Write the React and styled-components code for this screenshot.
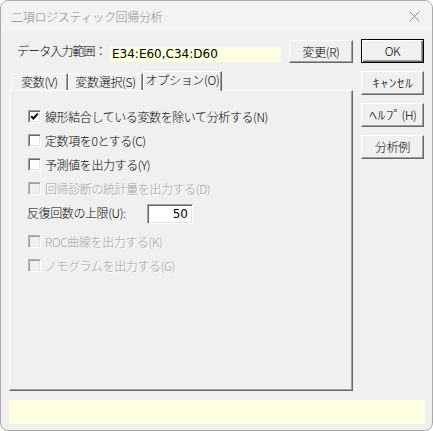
import React from "react";
import styled, { createGlobalStyle } from "styled-components";

const GlobalStyle = createGlobalStyle`
  html, body { margin: 0; padding: 0; background: #ffffff; }
  body { font-family: "Noto Sans CJK JP", "Noto Sans", sans-serif; font-size: 12px; font-weight: 300; color: #000; }
  * { box-sizing: border-box; }
`;

const Window = styled.div`
  width: 433px;
  height: 431px;
  border: 1px solid #a9a9a9;
  border-radius: 8px;
  overflow: hidden;
  background: #f0f0f0;
  display: flex;
  flex-direction: column;
`;

const TitleBar = styled.div`
  height: 30px;
  flex: none;
  background: #f3f3f3;
  display: flex;
  align-items: center;
  justify-content: space-between;
  padding: 0 9px 0 10px;
`;

const Title = styled.span`
  font-size: 12px;
  color: #8a8a8a;
  letter-spacing: -0.3px;
`;

const CloseIcon = styled.svg`
  width: 11px;
  height: 11px;
  margin-right: 3px;
`;

const Body = styled.div`
  flex: 1;
  display: flex;
  flex-direction: column;
  padding: 8px 6px 0 8px;
`;

const Main = styled.div`
  display: flex;
  gap: 8px;
`;

const LeftCol = styled.div`
  width: 344px;
  display: flex;
  flex-direction: column;
`;

const RightCol = styled.div`
  width: 63px;
  display: flex;
  flex-direction: column;
  gap: 8px;
`;

const RangeRow = styled.div`
  height: 23px;
  margin-top: 1px;
  display: flex;
  align-items: center;
`;

const RangeLabel = styled.span`
  width: 101px;
  padding-left: 8px;
  font-size: 12px;
  letter-spacing: -0.9px;
  margin-top: -2px;
`;

const RangeField = styled.div`
  width: 171px;
  height: 15px;
  align-self: flex-end;
  margin-bottom: 1px;
  background: #ffffe1;
  padding-left: 2px;
  font-family: "DejaVu Sans", sans-serif;
  font-weight: 400;
  font-size: 12px;
  line-height: 15px;
  color: #000;
  white-space: nowrap;
`;

const Button = styled.div`
  width: ${(p) => p.$w || 63}px;
  height: ${(p) => p.$h || 24}px;
  margin-left: ${(p) => (p.$push ? "auto" : "0")};
  background: #f0f0f0;
  border: 1px solid;
  border-color: ${(p) => (p.$default ? "#000" : "#fff #696969 #696969 #fff")};
  box-shadow: ${(p) =>
    p.$default
      ? "inset 1px 1px #fff, inset -1px -1px #696969, inset -2px -2px #a0a0a0"
      : "inset -1px -1px #a0a0a0"};
  display: flex;
  align-items: center;
  justify-content: center;
  font-size: 12px;
  letter-spacing: -0.4px;
  padding-bottom: 1px;
  white-space: nowrap;
`;

const HalfWidth = styled.span`
  display: inline-block;
  transform: scaleX(1.3);
  letter-spacing: 0.3px;
  margin: 0 4px;
`;

const TabStrip = styled.div`
  margin-top: 8px;
  height: 19px;
  display: flex;
  align-items: flex-end;
  padding-left: 2px;
`;

const Tab = styled.div`
  width: ${(p) => p.$w}px;
  height: ${(p) => (p.$active ? 20 : 17)}px;
  margin-bottom: ${(p) => (p.$active ? -1 : 0)}px;
  position: relative;
  z-index: ${(p) => (p.$active ? 1 : 0)};
  background: #f0f0f0;
  border-top: 1px solid #fff;
  border-left: 1px solid #fff;
  border-right: 1px solid #696969;
  box-shadow: inset -1px 0 #a0a0a0;
  font-size: 12px;
  letter-spacing: -0.3px;
  line-height: 15px;
  text-align: center;
  white-space: nowrap;
`;

const Panel = styled.div`
  height: 301px;
  border-top: 1px solid #fff;
  border-left: 1px solid #fff;
  border-right: 1px solid #696969;
  border-bottom: 1px solid #696969;
  box-shadow: inset -1px -1px #a0a0a0;
  display: flex;
  flex-direction: column;
  padding: 13px 0 0 18px;
`;

const OptionRow = styled.div`
  height: 24px;
  display: flex;
  align-items: center;
  gap: 4px;
  color: ${(p) => (p.$disabled ? "#a0a0a0" : "#000")};
  text-shadow: ${(p) => (p.$disabled ? "1px 1px #ffffff" : "none")};
  font-size: 12px;
  letter-spacing: -0.4px;
  white-space: nowrap;
`;

const Box = styled.span`
  width: 13px;
  height: 13px;
  flex: none;
  border: 1px solid;
  border-color: ${(p) => (p.$disabled ? "#b4b4b4 #fff #fff #b4b4b4" : "#a0a0a0 #fff #fff #a0a0a0")};
  box-shadow: ${(p) =>
    p.$disabled
      ? "inset 1px 1px #a0a0a0, inset -1px -1px #e3e3e3"
      : "inset 1px 1px #696969, inset -1px -1px #e3e3e3"};
  background: ${(p) => (p.$disabled ? "#f0f0f0" : "#fff")};
  display: flex;
  align-items: center;
  justify-content: center;
  text-shadow: none;
`;

const CheckMark = styled.svg`
  width: 9px;
  height: 9px;
`;

const LimitRow = styled.div`
  height: 26px;
  display: flex;
  align-items: center;
  margin-bottom: 3px;
`;

const LimitLabel = styled.span`
  width: 120px;
  margin-left: -1px;
  font-size: 12px;
  letter-spacing: -0.4px;
  margin-top: -2px;
`;

const NumberField = styled.div`
  width: 46px;
  height: 20px;
  margin-top: 2px;
  background: #fff;
  border: 1px solid;
  border-color: #a0a0a0 #fff #fff #a0a0a0;
  box-shadow: inset 1px 1px #696969, inset -1px -1px #e3e3e3;
  font-family: "DejaVu Sans", sans-serif;
  font-weight: 400;
  font-size: 12px;
  line-height: 18px;
  text-align: right;
  padding-right: 4px;
`;

const StatusBar = styled.div`
  margin-top: 9px;
  width: 416px;
  height: 24px;
  background: #ffffe1;
`;

function Check({ checked, disabled }) {
  return (
    <Box $disabled={disabled}>
      {checked && (
        <CheckMark viewBox="0 0 9 9">
          <polyline points="1.2,4.2 3.4,6.6 7.8,1.6" fill="none" stroke="#000" strokeWidth="2" />
        </CheckMark>
      )}
    </Box>
  );
}

function Option({ label, checked, disabled }) {
  return (
    <OptionRow $disabled={disabled}>
      <Check checked={checked} disabled={disabled} />
      <span>{label}</span>
    </OptionRow>
  );
}

export default function App() {
  return (
    <>
      <GlobalStyle />
      <Window>
        <TitleBar>
          <Title>二項ロジスティック回帰分析</Title>
          <CloseIcon viewBox="0 0 11 11">
            <path d="M0.5 0.5 L10.5 10.5 M10.5 0.5 L0.5 10.5" stroke="#8a8a8a" strokeWidth="1" fill="none" />
          </CloseIcon>
        </TitleBar>
        <Body>
          <Main>
            <LeftCol>
              <RangeRow>
                <RangeLabel>データ入力範囲：</RangeLabel>
                <RangeField>E34:E60,C34:D60</RangeField>
                <Button $w={64} $h={23} $push>変更(R)</Button>
              </RangeRow>
              <TabStrip>
                <Tab $w={57}>変数(V)</Tab>
                <Tab $w={75}>変数選択(S)</Tab>
                <Tab $w={79} $active>オプション(O)</Tab>
              </TabStrip>
              <Panel>
                <Option label="線形結合している変数を除いて分析する(N)" checked />
                <Option label="定数項を0とする(C)" />
                <Option label="予測値を出力する(Y)" />
                <Option label="回帰診断の統計量を出力する(D)" disabled />
                <LimitRow>
                  <LimitLabel>反復回数の上限(U):</LimitLabel>
                  <NumberField>50</NumberField>
                </LimitRow>
                <Option label="ROC曲線を出力する(K)" disabled />
                <Option label="ノモグラムを出力する(G)" disabled />
              </Panel>
            </LeftCol>
            <RightCol>
              <Button $default>OK</Button>
              <Button><HalfWidth>ｷｬﾝｾﾙ</HalfWidth></Button>
              <Button><HalfWidth>ﾍﾙﾌﾟ</HalfWidth>(H)</Button>
              <Button>分析例</Button>
            </RightCol>
          </Main>
          <StatusBar />
        </Body>
      </Window>
    </>
  );
}
